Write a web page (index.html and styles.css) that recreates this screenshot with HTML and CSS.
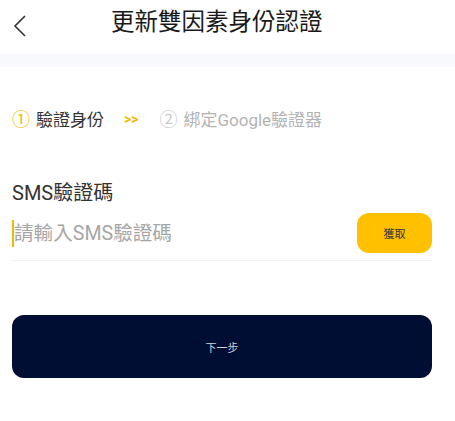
FILE: index.html
```html
<!DOCTYPE html>
<html lang="zh-Hant">
<head>
  <meta charset="UTF-8" />
  <meta name="viewport" content="width=device-width, initial-scale=1.0"/>
  <title>更新雙因素身份認證</title>
  <link rel="stylesheet" href="styles.css">
</head>
<body>
  <div class="header">
    <div class="back">
      <svg width="16" height="24" viewBox="0 0 16 24">
        <polyline points="13,2 3,12 13,22" fill="none" stroke="#333" stroke-width="1.6"/>
      </svg>
    </div>
    <div class="title">更新雙因素身份認證</div>
  </div>
  <div class="strip"></div>

  <div class="content">
    <div class="steps">
      <span class="step-num active">①</span>
      <span class="step-text active">驗證身份</span>
      <span class="arrow">&gt;&gt;</span>
      <span class="step-num">②</span>
      <span class="step-text">綁定Google驗證器</span>
    </div>

    <div class="label">SMS驗證碼</div>
    <div class="input-row">
      <span class="caret"></span>
      <input class="code-input" type="text" placeholder="請輸入SMS驗證碼">
      <button class="get-btn">獲取</button>
    </div>

    <button class="next-btn">下一步</button>
  </div>
</body>
</html>
```

FILE: styles.css
```css
body {
  margin: 0;
  font-family: Roboto, "Noto Sans CJK TC", sans-serif;
  background: #fff;
  color: #333;
}

.header {
  height: 54px;
  display: flex;
  align-items: center;
}

.back {
  width: 111px;
  padding-left: 12px;
  box-sizing: border-box;
  display: flex;
  align-items: center;
  margin-top: -2px;
}

.title {
  font-size: 23.5px;
  color: #1a1a1a;
  line-height: 30px;
  margin-top: -10px;
}

.strip {
  height: 13px;
  background: #f8f9fd;
}

.content {
  padding: 39px 23px 0 12px;
}

.steps {
  display: flex;
  align-items: center;
  height: 24px;
  font-size: 17px;
}

.step-num {
  color: #c8c8c8;
  font-size: 18px;
  margin-right: 6px;
  font-family: "Noto Sans CJK TC", sans-serif;
}

.step-num.active {
  color: #f5b800;
}

.step-text {
  color: #b3b3b3;
}

.step-text.active {
  color: #333;
}

.arrow {
  color: #f5b800;
  font-size: 14px;
  font-weight: bold;
  margin: 2px 21px 0 20px;
}

.label {
  margin-top: 51px;
  font-size: 20px;
  line-height: 24px;
  color: #333;
}

.input-row {
  margin-top: 8px;
  display: flex;
  align-items: center;
  padding-bottom: 7px;
  border-bottom: 1px solid #f3f3f3;
}

.caret {
  width: 2px;
  height: 27px;
  background: #f5b800;
}

.code-input {
  flex: 1;
  border: none;
  outline: none;
  padding: 0;
  font-size: 19.6px;
  font-family: Roboto, "Noto Sans CJK TC", sans-serif;
  color: #333;
  background: transparent;
}

.code-input::placeholder {
  color: #a6a6a6;
}

.get-btn {
  width: 75px;
  height: 40px;
  border: none;
  border-radius: 12px;
  background: #ffc000;
  color: #333;
  font-size: 11px;
  font-family: "Noto Sans CJK TC", sans-serif;
  padding: 0;
}

.next-btn {
  display: block;
  width: 100%;
  margin-top: 54px;
  height: 63px;
  border: none;
  border-radius: 12px;
  background: #000e33;
  color: #d0d3dc;
  font-size: 11px;
  font-family: "Noto Sans CJK TC", sans-serif;
}
```
